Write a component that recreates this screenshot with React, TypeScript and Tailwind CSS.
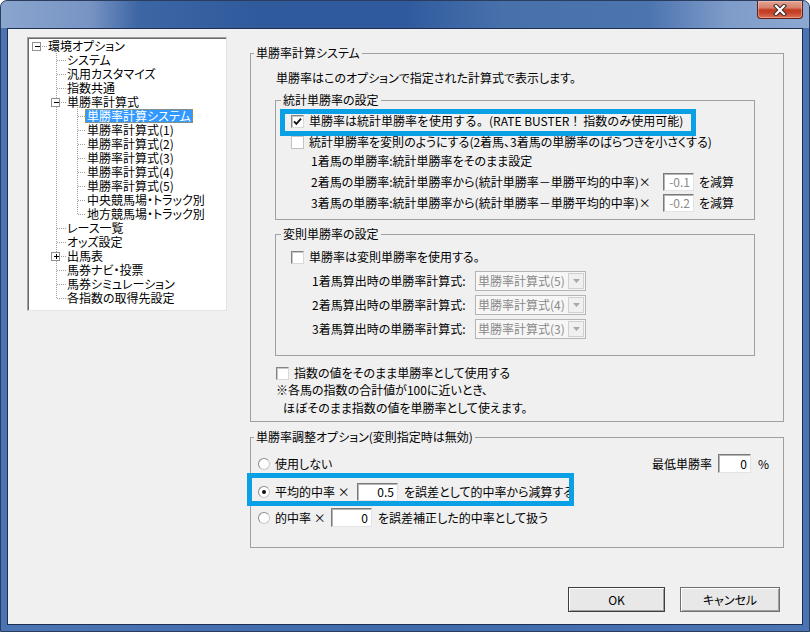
import React from 'react';

const FONT = "font-['Noto_Sans_CJK_JP','Noto_Sans_CJK_SC',sans-serif] [font-feature-settings:'palt']";

type TreeItem = { label: string; level: number; selected?: boolean };

const TREE: TreeItem[] = [
  { label: '環境オプション', level: 0 },
  { label: 'システム', level: 1 },
  { label: '汎用カスタマイズ', level: 1 },
  { label: '指数共通', level: 1 },
  { label: '単勝率計算式', level: 1 },
  { label: '単勝率計算システム', level: 2, selected: true },
  { label: '単勝率計算式(1)', level: 2 },
  { label: '単勝率計算式(2)', level: 2 },
  { label: '単勝率計算式(3)', level: 2 },
  { label: '単勝率計算式(4)', level: 2 },
  { label: '単勝率計算式(5)', level: 2 },
  { label: '中央競馬場・トラック別', level: 2 },
  { label: '地方競馬場・トラック別', level: 2 },
  { label: 'レース一覧', level: 1 },
  { label: 'オッズ設定', level: 1 },
  { label: '出馬表', level: 1 },
  { label: '馬券ナビ・投票', level: 1 },
  { label: '馬券シミュレーション', level: 1 },
  { label: '各指数の取得先設定', level: 1 },
];

const rowY = (k: number) => 8 + 14 * k;

// expander boxes: row index, centre x, open?
const BOXES: [number, number, boolean][] = [
  [0, 9, true],
  [4, 28, true],
  [15, 28, false],
];

function TreeLines() {
  const dots = { stroke: '#a0a0a0', strokeDasharray: '1 1', fill: 'none' };
  const lvl1 = [1, 2, 3, 13, 14, 16, 17, 18];
  const lvl2 = [5, 6, 7, 8, 9, 10, 11, 12];
  return (
    <svg className="pointer-events-none absolute left-0 top-0" width={198} height={272} shapeRendering="crispEdges">
      <line x1={14} x2={20} y1={rowY(0) + 0.5} y2={rowY(0) + 0.5} {...dots} />
      <line x1={28.5} x2={28.5} y1={rowY(0) + 5} y2={rowY(18) + 1} {...dots} />
      {lvl1.map((k) => (
        <line key={k} x1={29} x2={38} y1={rowY(k) + 0.5} y2={rowY(k) + 0.5} {...dots} />
      ))}
      <line x1={33} x2={38} y1={rowY(4) + 0.5} y2={rowY(4) + 0.5} {...dots} />
      <line x1={33} x2={38} y1={rowY(15) + 0.5} y2={rowY(15) + 0.5} {...dots} />
      <line x1={49.5} x2={49.5} y1={rowY(4) + 5} y2={rowY(12) + 1} {...dots} />
      {lvl2.map((k) => (
        <line key={k} x1={50} x2={58} y1={rowY(k) + 0.5} y2={rowY(k) + 0.5} {...dots} />
      ))}
      {BOXES.map(([k, cx, open]) => (
        <g key={k}>
          <rect x={cx - 4.5} y={rowY(k) - 3.5} width={8} height={8} fill="#fff" stroke="#919191" />
          <line x1={cx - 2} x2={cx + 3} y1={rowY(k) + 0.5} y2={rowY(k) + 0.5} stroke="#000" />
          {!open && <line x1={cx + 0.5} x2={cx + 0.5} y1={rowY(k) - 2} y2={rowY(k) + 3} stroke="#000" />}
        </g>
      ))}
    </svg>
  );
}

function Tree() {
  return (
    <div className="relative h-[274px] w-[200px] shrink-0 border border-t-[#a0a0a0] border-l-[#a0a0a0] border-r-[#e3e3e3] border-b-[#e3e3e3] bg-white pt-[1px] shadow-[inset_1px_1px_0_#696969]">
      <TreeLines />
      {TREE.map((item) => (
        <div
          key={item.label}
          className={`relative flex h-[14px] items-center whitespace-nowrap ${
            item.level === 0 ? 'pl-[20px]' : item.level === 1 ? 'pl-[39px]' : 'pl-[57px]'
          }`}
        >
          {item.selected ? (
            <span className="h-[14px] bg-[#3399ff] px-[2px] text-white outline outline-1 -outline-offset-1 outline-dotted outline-[#d08a1c]">
              {item.label}
            </span>
          ) : (
            <span className={item.level === 2 ? 'px-[2px]' : ''}>{item.label}</span>
          )}
        </div>
      ))}
    </div>
  );
}

function CheckBox({ checked, dim }: { checked?: boolean; dim?: boolean }) {
  return (
    <span
      className={`flex h-[13px] w-[13px] shrink-0 items-center justify-center border bg-white ${
        dim
          ? 'border-[#c2c2c2]'
          : 'border-t-[#838383] border-l-[#838383] border-r-[#d9d9d9] border-b-[#d9d9d9] shadow-[inset_1px_1px_0_#c8c8c8]'
      }`}
    >
      {checked && (
        <svg width="9" height="9" viewBox="0 0 9 9">
          <path d="M1 4.3 L3.4 6.8 L8 1.6" fill="none" stroke="#111" strokeWidth="1.8" />
        </svg>
      )}
    </span>
  );
}

function Radio({ checked }: { checked?: boolean }) {
  return (
    <span className="flex h-[12px] w-[12px] shrink-0 items-center justify-center rounded-full border border-t-[#8c8c8c] border-l-[#8c8c8c] border-r-[#c9c9c9] border-b-[#c9c9c9] bg-white">
      {checked && <span className="h-[4px] w-[4px] rounded-full bg-[#111]" />}
    </span>
  );
}

function NumBox({ value, className, disabled }: { value: string; className: string; disabled?: boolean }) {
  return (
    <span
      className={`flex shrink-0 items-center justify-end border border-t-[#7a7a7a] border-l-[#7a7a7a] border-r-[#e3e3e3] border-b-[#e3e3e3] bg-white pr-[3px] shadow-[inset_1px_1px_0_#b4b4b4] ${
        disabled ? 'text-[#8a8a8a]' : 'text-black'
      } ${className}`}
    >
      {value}
    </span>
  );
}

function Combo({ value }: { value: string }) {
  return (
    <span className="flex h-[20px] w-[111px] shrink-0 items-center border border-[#b5b5b5] bg-[#f6f6f6] text-[#8a8a8a]">
      <span className="flex-1 whitespace-nowrap pl-[2px]">{value}</span>
      <span className="mr-[1px] flex h-[16px] w-[16px] items-center justify-center border border-[#d0d0d0] bg-[#f0f0f0]">
        <svg width="7" height="4" viewBox="0 0 7 4">
          <path d="M0 0 H7 L3.5 4 Z" fill="#a9a9a9" />
        </svg>
      </span>
    </span>
  );
}

function CloseButton() {
  return (
    <div className="flex h-[18px] w-[46px] items-center justify-center rounded-b-[4px] border border-t-0 border-[#5c2218] bg-[linear-gradient(180deg,#e2a593_0%,#d6806b_40%,#c33a22_52%,#c6442b_70%,#dc7254_100%)] shadow-[inset_0_0_0_1px_rgba(255,210,200,0.45)]">
      <svg width="14" height="12" viewBox="0 0 14 12">
        <path d="M3 2 L11 10 M11 2 L3 10" stroke="#3b2a2a" strokeWidth="4.2" strokeLinecap="square" />
        <path d="M3 2 L11 10 M11 2 L3 10" stroke="#fff" strokeWidth="2.2" strokeLinecap="square" />
      </svg>
    </div>
  );
}

export default function App() {
  return (
    <div
      className={`${FONT} flex h-[632px] w-[810px] flex-col overflow-hidden rounded-t-[7px] border border-[#2a3d5e] bg-[linear-gradient(90deg,#4a74b2,#3f6aab_50%,#4a74b2)] text-[12px] leading-[14px] text-black`}
    >
      <div className="flex h-[27px] shrink-0 justify-end bg-[linear-gradient(90deg,#8aa5ce_0%,#7894c3_11%,#3d66a5_17%,#2f5a9c_32%,#2f5b9e_50%,#4870ab_62%,#4c74af_80%,#7f9cc9_90%,#8da9d2_100%)] pr-[6px]">
        <CloseButton />
      </div>

      <div className="mx-[6px] mb-[6px] flex flex-1 flex-col border border-[#1b2f52] bg-[#f0f0f0]">
        <div className="flex items-start pl-[19px] pt-[8px]">
          <Tree />

          <div className="ml-[23px] mt-[9px] flex w-[534px] flex-col">
            <fieldset className="border border-[#a0a0a0] pb-[6px]">
              <legend className="ml-[3px] px-[2px]">単勝率計算システム</legend>
              <div className="pl-[24px]">
                <div className="mt-[11px] h-[14px] whitespace-nowrap pl-[1px]">
                  単勝率はこのオプションで指定された計算式で表示します。
                </div>

                <fieldset className="mt-[8px] w-[480px] border border-[#a0a0a0] pb-[7px]">
                  <legend className="ml-[5px] px-[2px]">統計単勝率の設定</legend>
                  <div className="relative mt-[7px] flex h-[14px] items-center whitespace-nowrap pl-[15px]">
                    <CheckBox checked />
                    <span className="ml-[5px] [font-feature-settings:normal]">単勝率は統計単勝率を使用する。</span>
                    <span>(RATE BUSTER</span>
                    <span className="[font-feature-settings:normal]">！</span>
                    <span className="ml-[2px] [font-feature-settings:normal]">指数のみ使用可能)</span>
                    <div className="absolute left-[4px] top-[-5px] z-10 h-[27px] w-[416px] border-[5px] border-[#0aa0e6]" />
                  </div>
                  <div className="mt-[7px] flex h-[14px] items-center whitespace-nowrap pl-[15px]">
                    <CheckBox dim />
                    <span className="ml-[5px]">統計単勝率を変則のようにする(2着馬、3着馬の単勝率のばらつきを小さくする)</span>
                  </div>
                  <div className="mt-[5px] h-[14px] whitespace-nowrap pl-[35px]">1着馬の単勝率:統計単勝率をそのまま設定</div>
                  <div className="mt-[5px] flex h-[18px] items-center whitespace-nowrap pl-[35px]">
                    <span className="w-[352px]">2着馬の単勝率:統計単勝率から(統計単勝率－単勝平均的中率)×</span>
                    <NumBox value="-0.1" disabled className="h-[18px] w-[31px]" />
                    <span className="ml-[5px]">を減算</span>
                  </div>
                  <div className="mt-[3px] flex h-[18px] items-center whitespace-nowrap pl-[35px]">
                    <span className="w-[352px]">3着馬の単勝率:統計単勝率から(統計単勝率－単勝平均的中率)×</span>
                    <NumBox value="-0.2" disabled className="h-[18px] w-[31px]" />
                    <span className="ml-[5px]">を減算</span>
                  </div>
                </fieldset>

                <fieldset className="mt-[7px] w-[480px] border border-[#a0a0a0] pb-[16px]">
                  <legend className="ml-[5px] px-[2px]">変則単勝率の設定</legend>
                  <div className="mt-[9px] flex h-[14px] items-center whitespace-nowrap pl-[15px]">
                    <CheckBox />
                    <span className="ml-[5px]">単勝率は変則単勝率を使用する。</span>
                  </div>
                  {[
                    ['1着馬算出時の単勝率計算式:', '単勝率計算式(5)', 'mt-[7px]'],
                    ['2着馬算出時の単勝率計算式:', '単勝率計算式(4)', 'mt-[4px]'],
                    ['3着馬算出時の単勝率計算式:', '単勝率計算式(3)', 'mt-[4px]'],
                  ].map(([label, value, mt]) => (
                    <div key={label} className={`${mt} flex h-[20px] items-center whitespace-nowrap pl-[36px]`}>
                      <span className="w-[163px]">{label}</span>
                      <Combo value={value} />
                    </div>
                  ))}
                </fieldset>

                <div className="mt-[10px] flex h-[14px] items-center whitespace-nowrap pl-[1px]">
                  <CheckBox />
                  <span className="ml-[5px]">指数の値をそのまま単勝率として使用する</span>
                </div>
                <div className="mt-[3px] h-[14px] whitespace-nowrap pl-[1px]">※各馬の指数の合計値が100に近いとき、</div>
                <div className="mt-[4px] h-[14px] whitespace-nowrap pl-[8px]">ほぼそのまま指数の値を単勝率として使えます。</div>
              </div>
            </fieldset>

            <fieldset className="mt-[8px] border border-[#a0a0a0] pb-[20px]">
              <legend className="ml-[3px] px-[2px]">単勝率調整オプション(変則指定時は無効)</legend>
              <div className="mt-[10px] flex h-[19px] items-center whitespace-nowrap pl-[7px]">
                <Radio />
                <span className="ml-[5px]">使用しない</span>
                <div className="ml-auto flex w-[131px] items-center">
                  <span className="w-[66px]">最低単勝率</span>
                  <NumBox value="0" className="h-[19px] w-[33px]" />
                  <span className="ml-[7px]">%</span>
                </div>
              </div>
              <div className="relative mt-[10px] flex h-[18px] items-center whitespace-nowrap pl-[7px]">
                <Radio checked />
                <span className="ml-[5px] w-[82px]">平均的中率 ×</span>
                <NumBox value="0.5" className="h-[18px] w-[41px]" />
                <span className="ml-[6px]">を誤差として的中率から減算する</span>
                <div className="absolute left-[-4px] top-[-10px] z-10 h-[33px] w-[327px] border-[5px] border-[#0aa0e6]" />
              </div>
              <div className="mt-[7px] flex h-[19px] items-center whitespace-nowrap pl-[7px]">
                <Radio />
                <span className="ml-[5px] w-[56px]">的中率 ×</span>
                <NumBox value="0" className="h-[19px] w-[41px]" />
                <span className="ml-[6px]">を誤差補正した的中率として扱う</span>
              </div>
            </fieldset>

            <div className="mt-[39px] flex justify-end gap-[15px] pr-[4px]">
              <button className="h-[25px] w-[97px] border border-[#3f3f3f] bg-[#e8e8e8] shadow-[inset_1px_1px_0_#fff,inset_-1px_-1px_0_#a0a0a0]">
                OK
              </button>
              <button className="h-[25px] w-[100px] border border-[#707070] bg-[#e8e8e8] shadow-[inset_1px_1px_0_#fff,inset_-1px_-1px_0_#a0a0a0]">
                キャンセル
              </button>
            </div>
          </div>
        </div>
      </div>
    </div>
  );
}
